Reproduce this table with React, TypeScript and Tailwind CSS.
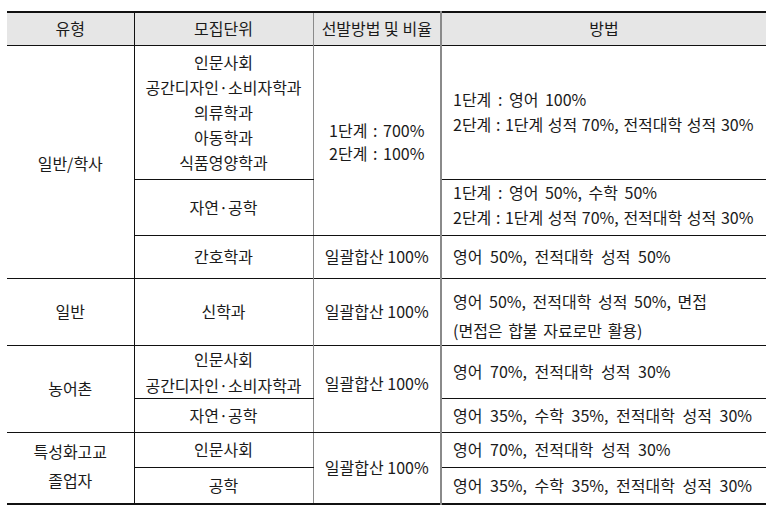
import React from "react";

const font = { fontFamily: '"Noto Sans CJK KR", "Noto Sans", sans-serif' };

export default function App() {
  const c1 = "border-r border-r-[#111] text-center align-middle";
  const c2 = "border-r border-r-[#8a8a8a] text-center align-middle";
  const c3 = "border-r-2 border-r-[#8a8a8a] text-center align-middle";
  const c4 = "text-left align-middle pl-[11px] [word-spacing:4px] whitespace-nowrap";
  return (
    <div className="w-[773px] h-[514px] bg-white pt-[11px] pl-[7px] text-[#1a1a1a] text-[16px] leading-[25px]" style={font}>
      <table className="w-[759px] table-fixed border-collapse border-b-2 border-b-[#111]">
        <colgroup>
          <col className="w-[127px]" />
          <col className="w-[179px]" />
          <col className="w-[128px]" />
          <col className="w-[325px]" />
        </colgroup>
        <tbody>
          <tr className="bg-[#e6e6e6] border-t-2 border-t-[#111] border-b border-b-[#111] h-[33px]">
            <td className={c1}>유형</td>
            <td className={c2}>모집단위</td>
            <td className={c3 + " whitespace-nowrap"}>선발방법 및 비율</td>
            <td className="text-center align-middle">방법</td>
          </tr>
          <tr className="h-[134px]">
            <td rowSpan={3} className={c1 + " border-b border-b-[#111] pt-[4px]"}>일반/학사</td>
            <td className={c2 + " border-b border-b-[#111] whitespace-nowrap"}>
              인문사회<br />공간디자인·소비자학과<br />의류학과<br />아동학과<br />식품영양학과
            </td>
            <td rowSpan={2} className={c3 + " border-b border-b-[#111] leading-[23px] pt-[4px] [word-spacing:2px]"}>
              1단계 : 700%<br />2단계 : 100%
            </td>
            <td className={c4 + " border-b border-b-[#111]"}>
              <span className="[word-spacing:3px]">1단계 : 영어 100%</span><br />
              <span className="[word-spacing:1px]">2단계 : 1단계 성적 70%, 전적대학 성적 30%</span>
            </td>
          </tr>
          <tr className="h-[56px]">
            <td className={c2 + " border-b border-b-[#111]"}>자연·공학</td>
            <td className={c4 + " border-b border-b-[#111] pb-[5px]"}>
              <span className="[word-spacing:3px]">1단계 : 영어 50%, 수학 50%</span><br />
              <span className="[word-spacing:1px]">2단계 : 1단계 성적 70%, 전적대학 성적 30%</span>
            </td>
          </tr>
          <tr className="h-[43px] border-b border-b-[#111]">
            <td className={c2}>간호학과</td>
            <td className={c3}>일괄합산 100%</td>
            <td className={c4}>영어 50%, 전적대학 성적 50%</td>
          </tr>
          <tr className="h-[67px] border-b border-b-[#111]">
            <td className={c1}>일반</td>
            <td className={c2}>신학과</td>
            <td className={c3}>일괄합산 100%</td>
            <td className={c4 + " leading-[29px] pt-[8px]"}>
              <span className="[word-spacing:3px]">영어 50%, 전적대학 성적 50%, 면접</span><br />
              <span className="[word-spacing:2px]">(면접은 합불 자료로만 활용)</span>
            </td>
          </tr>
          <tr className="h-[53px]">
            <td rowSpan={2} className={c1 + " border-b border-b-[#111]"}>농어촌</td>
            <td className={c2 + " border-b border-b-[#111] leading-[26px] whitespace-nowrap"}>
              인문사회<br />공간디자인·소비자학과
            </td>
            <td rowSpan={2} className={c3 + " border-b border-b-[#111] pb-[10px]"}>일괄합산 100%</td>
            <td className={c4 + " border-b border-b-[#111]"}>영어 70%, 전적대학 성적 30%</td>
          </tr>
          <tr className="h-[34px] border-b border-b-[#111]">
            <td className={c2}>자연·공학</td>
            <td className={c4}>영어 35%, 수학 35%, 전적대학 성적 30%</td>
          </tr>
          <tr className="h-[35px]">
            <td rowSpan={2} className={c1 + " leading-[29px] pb-[4px]"}>
              특성화고교<br />졸업자
            </td>
            <td className={c2 + " border-b border-b-[#111]"}>인문사회</td>
            <td rowSpan={2} className={c3}>일괄합산 100%</td>
            <td className={c4 + " border-b border-b-[#111]"}>영어 70%, 전적대학 성적 30%</td>
          </tr>
          <tr className="h-[37px]">
            <td className={c2}>공학</td>
            <td className={c4}>영어 35%, 수학 35%, 전적대학 성적 30%</td>
          </tr>
        </tbody>
      </table>
    </div>
  );
}
